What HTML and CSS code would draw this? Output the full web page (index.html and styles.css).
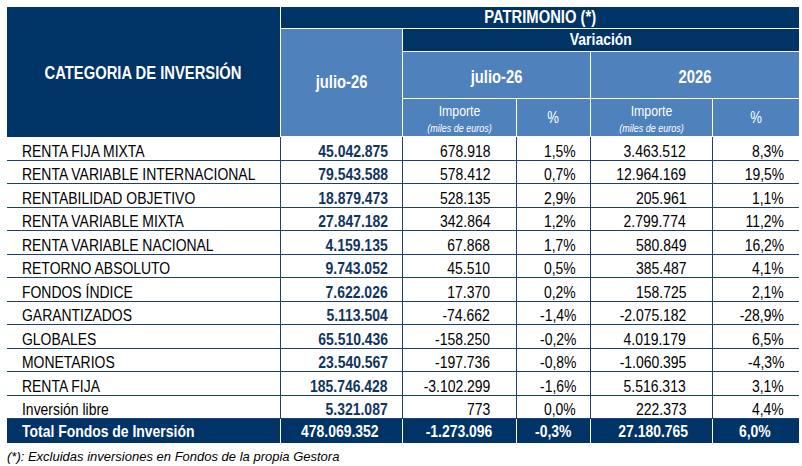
FILE: index.html
```html
<!DOCTYPE html>
<html lang="es">
<head>
<meta charset="utf-8">
<title>Patrimonio por categoría de inversión</title>
<link rel="stylesheet" href="styles.css">
</head>
<body>
<div class="wrap">
<table class="tbl">
  <colgroup>
    <col class="c1"><col class="c2"><col class="c3"><col class="c4"><col class="c5"><col class="c6">
  </colgroup>
  <thead>
    <tr class="h1">
      <th class="dark cat" rowspan="4"><span class="s">CATEGORIA DE INVERSIÓN</span></th>
      <th class="dark big last" colspan="5"><span class="s">PATRIMONIO (*)</span></th>
    </tr>
    <tr class="h2">
      <th class="light big" rowspan="3"><span class="s">julio-26</span></th>
      <th class="dark mid last" colspan="4"><span class="s">Variación</span></th>
    </tr>
    <tr class="h3">
      <th class="light big per" colspan="2"><span class="s">julio-26</span></th>
      <th class="light big per last" colspan="2"><span class="s">2026</span></th>
    </tr>
    <tr class="h4">
      <th class="light sub"><span class="s imp">Importe</span><span class="s miles">(miles de euros)</span></th>
      <th class="light pct"><span class="s">%</span></th>
      <th class="light sub"><span class="s imp">Importe</span><span class="s miles">(miles de euros)</span></th>
      <th class="light pct last"><span class="s">%</span></th>
    </tr>
  </thead>
  <tbody>
    <tr><td class="name"><span class="s">RENTA FIJA MIXTA</span></td><td class="pat"><span class="s">45.042.875</span></td><td class="imp-v"><span class="s">678.918</span></td><td class="pc"><span class="s">1,5%</span></td><td class="imp-v"><span class="s">3.463.512</span></td><td class="pc last"><span class="s">8,3%</span></td></tr>
    <tr><td class="name"><span class="s">RENTA VARIABLE INTERNACIONAL</span></td><td class="pat"><span class="s">79.543.588</span></td><td class="imp-v"><span class="s">578.412</span></td><td class="pc"><span class="s">0,7%</span></td><td class="imp-v"><span class="s">12.964.169</span></td><td class="pc last"><span class="s">19,5%</span></td></tr>
    <tr><td class="name"><span class="s">RENTABILIDAD OBJETIVO</span></td><td class="pat"><span class="s">18.879.473</span></td><td class="imp-v"><span class="s">528.135</span></td><td class="pc"><span class="s">2,9%</span></td><td class="imp-v"><span class="s">205.961</span></td><td class="pc last"><span class="s">1,1%</span></td></tr>
    <tr><td class="name"><span class="s">RENTA VARIABLE MIXTA</span></td><td class="pat"><span class="s">27.847.182</span></td><td class="imp-v"><span class="s">342.864</span></td><td class="pc"><span class="s">1,2%</span></td><td class="imp-v"><span class="s">2.799.774</span></td><td class="pc last"><span class="s">11,2%</span></td></tr>
    <tr><td class="name"><span class="s">RENTA VARIABLE NACIONAL</span></td><td class="pat"><span class="s">4.159.135</span></td><td class="imp-v"><span class="s">67.868</span></td><td class="pc"><span class="s">1,7%</span></td><td class="imp-v"><span class="s">580.849</span></td><td class="pc last"><span class="s">16,2%</span></td></tr>
    <tr><td class="name"><span class="s">RETORNO ABSOLUTO</span></td><td class="pat"><span class="s">9.743.052</span></td><td class="imp-v"><span class="s">45.510</span></td><td class="pc"><span class="s">0,5%</span></td><td class="imp-v"><span class="s">385.487</span></td><td class="pc last"><span class="s">4,1%</span></td></tr>
    <tr><td class="name"><span class="s">FONDOS ÍNDICE</span></td><td class="pat"><span class="s">7.622.026</span></td><td class="imp-v"><span class="s">17.370</span></td><td class="pc"><span class="s">0,2%</span></td><td class="imp-v"><span class="s">158.725</span></td><td class="pc last"><span class="s">2,1%</span></td></tr>
    <tr><td class="name"><span class="s">GARANTIZADOS</span></td><td class="pat"><span class="s">5.113.504</span></td><td class="imp-v"><span class="s">-74.662</span></td><td class="pc"><span class="s">-1,4%</span></td><td class="imp-v"><span class="s">-2.075.182</span></td><td class="pc last"><span class="s">-28,9%</span></td></tr>
    <tr><td class="name"><span class="s">GLOBALES</span></td><td class="pat"><span class="s">65.510.436</span></td><td class="imp-v"><span class="s">-158.250</span></td><td class="pc"><span class="s">-0,2%</span></td><td class="imp-v"><span class="s">4.019.179</span></td><td class="pc last"><span class="s">6,5%</span></td></tr>
    <tr><td class="name"><span class="s">MONETARIOS</span></td><td class="pat"><span class="s">23.540.567</span></td><td class="imp-v"><span class="s">-197.736</span></td><td class="pc"><span class="s">-0,8%</span></td><td class="imp-v"><span class="s">-1.060.395</span></td><td class="pc last"><span class="s">-4,3%</span></td></tr>
    <tr><td class="name"><span class="s">RENTA FIJA</span></td><td class="pat"><span class="s">185.746.428</span></td><td class="imp-v"><span class="s">-3.102.299</span></td><td class="pc"><span class="s">-1,6%</span></td><td class="imp-v"><span class="s">5.516.313</span></td><td class="pc last"><span class="s">3,1%</span></td></tr>
    <tr><td class="name"><span class="s">Inversión libre</span></td><td class="pat"><span class="s">5.321.087</span></td><td class="imp-v"><span class="s">773</span></td><td class="pc"><span class="s">0,0%</span></td><td class="imp-v"><span class="s">222.373</span></td><td class="pc last"><span class="s">4,4%</span></td></tr>
  </tbody>
  <tfoot>
    <tr class="total">
      <td class="t-name"><span class="s">Total Fondos de Inversión</span></td>
      <td class="t-pat"><span class="s">478.069.352</span></td>
      <td class="t-imp"><span class="s">-1.273.096</span></td>
      <td class="t-pc"><span class="s">-0,3%</span></td>
      <td class="t-imp"><span class="s">27.180.765</span></td>
      <td class="t-pc2 last"><span class="s">6,0%</span></td>
    </tr>
  </tfoot>
</table>
<p class="note">(*): Excluidas inversiones en Fondos de la propia Gestora</p>
</div>
</body>
</html>
```
FILE: styles.css
```css
html, body {
  margin: 0;
  padding: 0;
  background: #ffffff;
}

.wrap {
  padding: 7px 0 0 7px;
}

.tbl {
  border-collapse: separate;
  border-spacing: 0;
  table-layout: fixed;
  width: 792px;
  font-family: "Liberation Sans", Arial, sans-serif;
  color: #000000;
}

/* Arial Narrow look: condense the glyphs horizontally */
.s {
  display: inline-block;
  white-space: nowrap;
  transform: scaleX(0.82);
  transform-origin: right center;
}

th .s { transform-origin: center center; }
td.name .s,
td.t-name .s { transform-origin: left center; }

.c1 { width: 274px; }
.c2 { width: 122px; }
.c3 { width: 114px; }
.c4 { width: 74px; }
.c5 { width: 122px; }
.c6 { width: 86px; }

th {
  padding: 0;
  color: #ffffff;
  font-weight: bold;
  text-align: center;
  vertical-align: middle;
  border-right: 1px solid #ffffff;
  border-bottom: 1px solid #ffffff;
  box-sizing: border-box;
  white-space: nowrap;
}

th.last { border-right: 0; }

.dark { background: #003366; }
.light { background: #4f81bd; }

.h1 { height: 22px; }
.h2 { height: 23px; }
.h3 { height: 47px; }
.h4 { height: 38px; }

.cat {
  font-size: 18px;
  border-bottom: 0;
  padding-top: 2px;
}

.big { font-size: 18px; }
.mid { font-size: 17px; }
.per { padding-top: 4px; }

.sub {
  font-weight: normal;
  line-height: 1;
  padding-top: 1px;
}

.sub .imp {
  display: block;
  font-size: 15px;
}

.sub .miles {
  display: block;
  font-size: 11px;
  font-style: italic;
  margin-top: 5px;
}

.pct {
  font-weight: normal;
  font-size: 16px;
}

tbody tr { height: 23.5px; }

td {
  padding: 0;
  font-size: 17px;
  line-height: 16px;
  vertical-align: bottom;
  text-align: right;
  white-space: nowrap;
  border-right: 1px solid #1f3f6e;
  border-bottom: 1px solid #1f3f6e;
  box-sizing: border-box;
}

td.last { border-right: 0; }

td.name {
  text-align: left;
  padding-left: 15px;
}

td.pat {
  font-weight: bold;
  color: #0f3461;
  padding-right: 14px;
}

td.imp-v { padding-right: 26px; }
td.pc { padding-right: 14px; }
td.pc.last { padding-right: 15px; }

.total { height: 24px; }

.total td {
  background: #003366;
  color: #ffffff;
  font-weight: bold;
  vertical-align: middle;
  line-height: 18px;
  border-right: 1px solid #ffffff;
  border-bottom: 0;
  padding-top: 1px;
}

.total td.last { border-right: 0; }

.total .t-name { text-align: left; padding-left: 15px; }
.total .t-pat { padding-right: 23px; }
.total .t-imp { padding-right: 24px; }
.total .t-pc { padding-right: 19px; }
.total .t-pc2 { padding-right: 28px; }

.note {
  margin: 6px 0 0 0;
  font-family: "Liberation Sans", Arial, sans-serif;
  font-size: 13px;
  font-style: italic;
  line-height: 15px;
  color: #000000;
}
```
